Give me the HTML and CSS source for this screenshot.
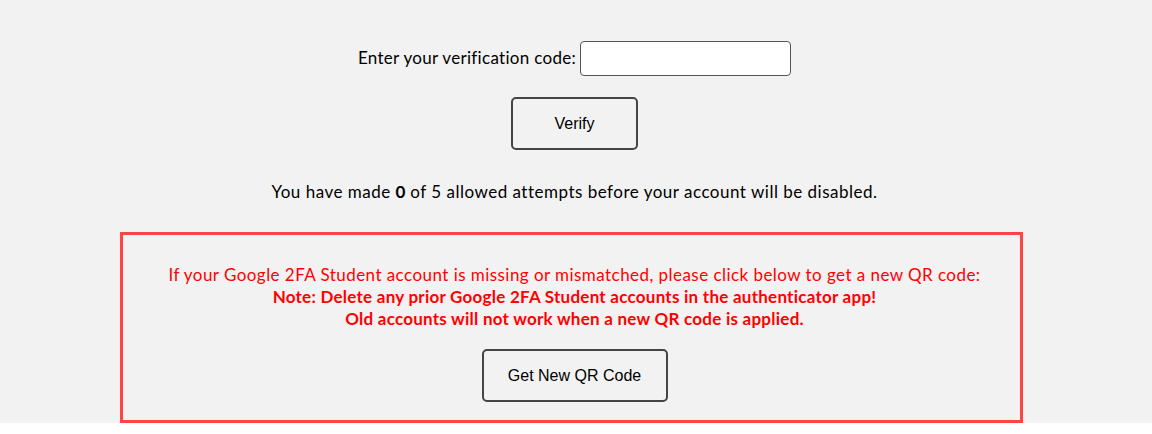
FILE: index.html
```html
<!DOCTYPE html>
<html>
<head>
<meta charset="utf-8">
<link rel="stylesheet" href="styles.css">
</head>
<body>
<div class="page">
  <div class="code-row">
    <label class="label" for="code">Enter your verification code:</label>
    <input class="code-input" id="code" type="text">
  </div>
  <div class="btn-row">
    <button class="btn verify">Verify</button>
  </div>
  <p class="attempts">You have made <b>0</b> of 5 allowed attempts before your account will be disabled.</p>
  <div class="qr-box">
    <p class="qr-line">If your Google 2FA Student account is missing or mismatched, please click below to get a new QR code:</p>
    <p class="qr-note">Note: Delete any prior Google 2FA Student accounts in the authenticator app!</p>
    <p class="qr-note">Old accounts will not work when a new QR code is applied.</p>
    <div class="btn-row qr-btn-row">
      <button class="btn qr">Get New QR Code</button>
    </div>
  </div>
</div>
</body>
</html>
```
FILE: styles.css
```css
html { background: #ffffff; }
body { margin: 0; font-family: "Lato", "DejaVu Sans", sans-serif; color: #000; }
.page { background: #f2f2f2; padding: 41px 3px 0 0; height: 382px; }
.code-row { display: flex; justify-content: center; align-items: center; gap: 4px; }
.label { font-size: 17px; letter-spacing: 0.3px; position: relative; top: -1px; }
.code-input { width: 211px; height: 35px; box-sizing: border-box; border: 1px solid #555; border-radius: 4px; background: #fff; margin: 0; padding: 0 6px; }
.btn-row { display: flex; justify-content: center; }
.btn { font-family: "Liberation Sans", Arial, sans-serif; font-size: 16px; color: #000; background: #f2f2f2; border: 2px solid #444; border-radius: 5px; height: 53px; box-sizing: border-box; padding: 0; cursor: pointer; }
.verify { width: 127px; margin-top: 21px; }
.attempts { text-align: center; font-size: 17px; letter-spacing: 0.5px; margin: 32px 0 0; line-height: 20px; }
.attempts b { letter-spacing: 0; }
.qr-box { margin: 30px 0 0 120px; width: 903px; height: 191px; box-sizing: border-box; border: 3px solid #ff4444; padding: 29px 0 0 6px; text-align: center; }
.qr-line { margin: 0; color: #ff0000; font-size: 17px; letter-spacing: 0.45px; line-height: 22px; }
.qr-note { margin: 0; color: #ff0000; font-weight: bold; font-size: 17px; letter-spacing: 0.25px; line-height: 22px; }
.qr-btn-row { margin-top: 19px; }
.qr { width: 186px; }
```
